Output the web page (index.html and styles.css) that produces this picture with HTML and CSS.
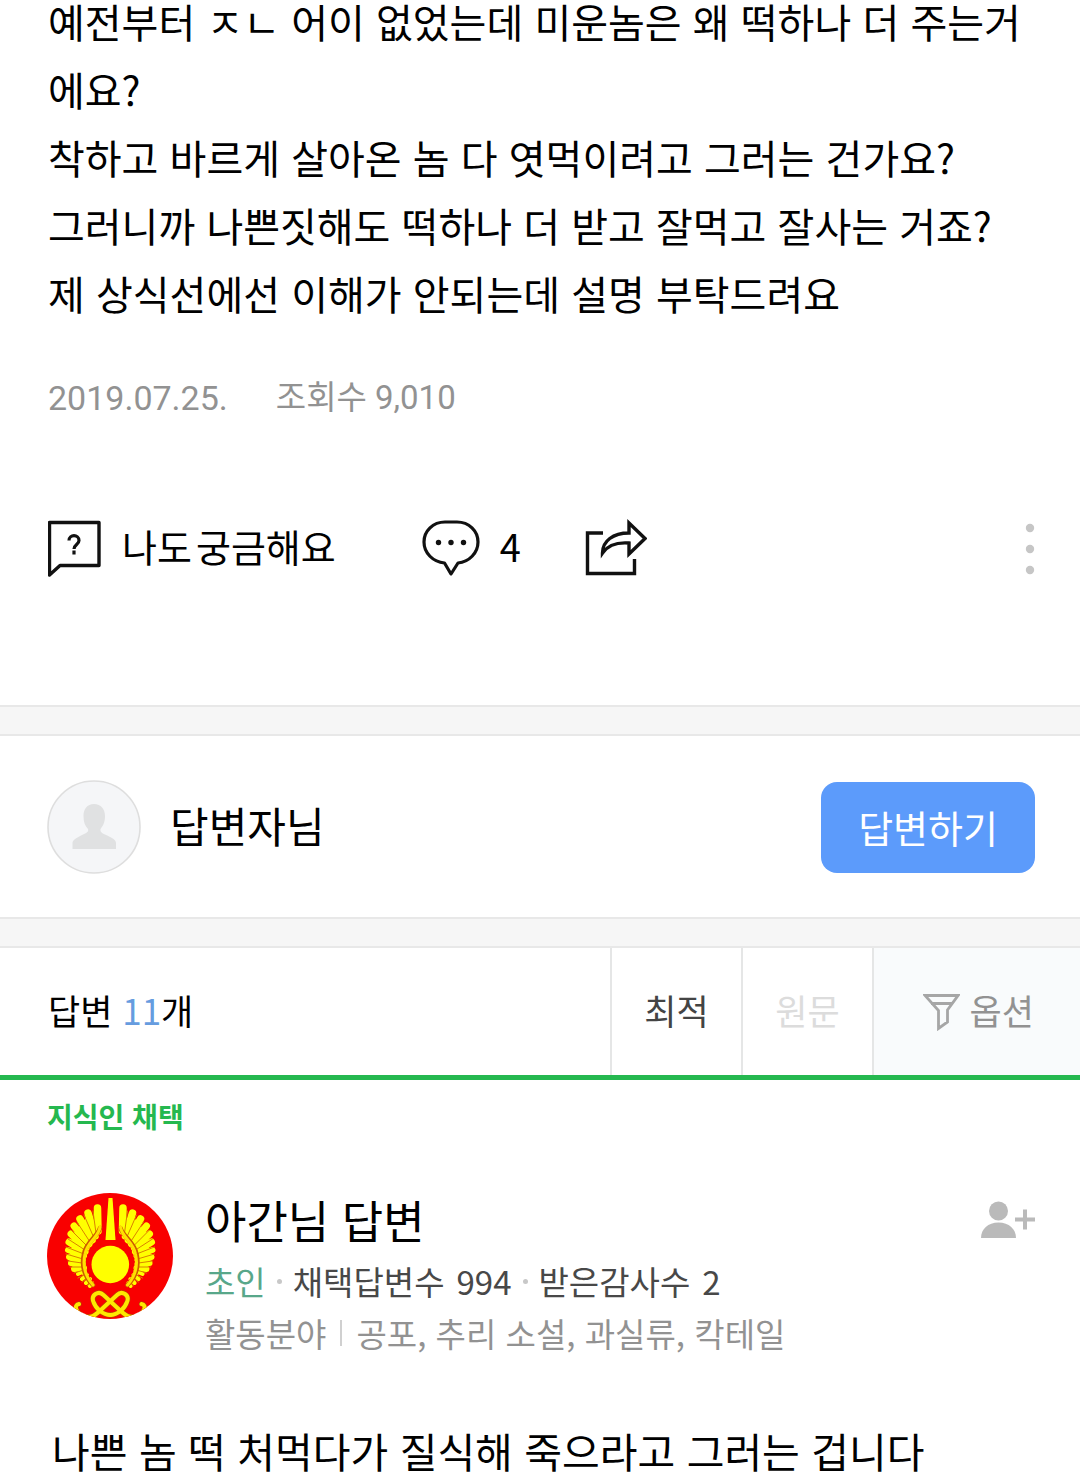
FILE: index.html
```html
<!DOCTYPE html>
<html lang="ko">
<head>
<meta charset="utf-8">
<title>지식인</title>
<meta name="viewport" content="width=device-width, initial-scale=1">
<link rel="stylesheet" href="styles.css">
</head>
<body>
<section class="question">
  <p class="question-text">예전부터 ㅈㄴ 어이 없었는데 미운놈은 왜 떡하나 더 주는거에요?<br>착하고 바르게 살아온 놈 다 엿먹이려고 그러는 건가요?<br>그러니까 나쁜짓해도 떡하나 더 받고 잘먹고 잘사는 거죠?<br>제 상식선에선 이해가 안되는데 설명 부탁드려요</p>
  <div class="meta">
    <span>2019.07.25.</span>
    <span class="views">조회수 9,010</span>
  </div>
  <div class="actions">
    <button class="action curious">
      <svg width="54" height="60" viewBox="0 0 54 60" fill="none" stroke="#111" stroke-width="3.4">
        <path d="M1.500 4.500H51V47.500H12L1.500 57Z" stroke-linejoin="round"/>
        <path d="M21 22.500c0-6.500 10-6.500 10 0c0 4-5 4-5 8.500M26 32.500v4" stroke-width="3.2"/>
      </svg>
      <span class="action-label"><span>나도</span><span>궁금해요</span></span>
    </button>
    <button class="action comments">
      <svg width="58" height="60" viewBox="0 0 58 60" fill="none" stroke="#111" stroke-width="3.2">
        <path d="M23 4H35C47 4 56 13 56 24C56 35 47 44 36 45L29 56L22.500 45C11 44 2 35 2 24C2 13 11 4 23 4Z" stroke-linejoin="round"/>
        <g fill="#111" stroke="none"><circle cx="16.500" cy="24.500" r="2.700"/><circle cx="29" cy="24.500" r="2.700"/><circle cx="41.500" cy="24.500" r="2.700"/></g>
      </svg>
      <span class="action-label">4</span>
    </button>
    <button class="action share" aria-label="공유">
      <svg width="62" height="60" viewBox="0 0 62 60" fill="none" stroke="#111" stroke-width="3.4">
        <path d="M18 15H2.500V55.500H49.500V41"/>
        <path d="M17.500 35C17.500 23 28 15 44 15V5L60 20.500L44 36V25C31 24 23 27 17.500 35Z"/>
      </svg>
    </button>
    <button class="action more" aria-label="더보기">
      <svg width="10" height="60" viewBox="0 0 10 60" fill="#c6c6c6"><circle cx="5" cy="10" r="4.200"/><circle cx="5" cy="31" r="4.200"/><circle cx="5" cy="52" r="4.200"/></svg>
    </button>
  </div>
</section>

<div class="divider"></div>

<section class="answerer">
  <svg class="avatar" viewBox="0 0 94 94">
    <circle cx="47" cy="47" r="46" fill="#f5f6f8" stroke="#dedede" stroke-width="1.600"/>
    <path d="M47 24C54 24 58 29 58 36C58 42 56 46 53.500 49C53 52 55 53 58 54.500C66 58 69 60 69 63V69H25.500V63C25.500 60 29 58 36 54.500C39 53 42 52 41 49C38 46 36.500 42 36.500 36C36.500 29 40 24 47 24Z" fill="#e0e1e2"/>
  </svg>
  <span class="answerer-name">답변자님</span>
  <button class="answer-btn">답변하기</button>
</section>

<div class="divider"></div>

<section class="answers">
  <div class="answers-bar">
    <h2 class="answers-count">답변 <span>11</span>개</h2>
    <button class="tab tab-on">최적</button>
    <button class="tab tab-off">원문</button>
    <button class="tab option">
      <svg width="37" height="38" viewBox="0 0 37 38" fill="none" stroke="#a6a6a6" stroke-width="2.800">
        <path d="M2 2.500H35L24.500 17V29L15.500 35.500V17.500ZM8 10.500H29"/>
      </svg>
      <span>옵션</span>
    </button>
  </div>

  <article class="answer">
    <p class="picked">지식인 채택</p>
    <header class="profile">
      <svg class="profile-pic" viewBox="0 0 126 126">
        <defs>
          <clipPath id="round"><circle cx="63" cy="63" r="63"/></clipPath>
          <g id="wing" fill="none" stroke-linecap="round">
            <path d="M50 41L41 51L36 63L36 74L45 90L30 77L24 60L27 40L40 24Z" fill="#ff0"/>
            <g stroke="#ff0">
              <path d="M50.500 15L51 38M41 20L48 43M33 26L45 47" stroke-width="7.500"/>
              <path d="M27 33L42 51M24 41L39 55M22 49L38 59" stroke-width="7"/>
              <path d="M21 57L37 63M22 64L36 67M24 70L36 71M27 76L37 75" stroke-width="6"/>
              <path d="M31 81L38 78M35 86L40 82M39 90L43 86M43 93L45 90" stroke-width="4"/>
            </g>
            <g stroke="#d98200" stroke-width="1">
              <path d="M46 18L49 40M37 22L47 45M30 29L43 49M24 37L40 53M21 46L38 57M19 54L37 61M19 61L36 66M21 68L35 70M23 74L36 74M27 80L37 77M31 85L39 81M35 89L41 85M40 93L44 89"/>
            </g>
            <path d="M53 35C51 43 39 49 37 61C34 74 38 84 46 92" stroke="#cf5a00" stroke-width="4.500"/>
            <path d="M53 34C52 44 40 49 38 61C35 74 39 84 46 92" stroke="#ffe100" stroke-width="3"/>
          </g>
          <path id="strand" d="M32 111C26 112 30 120 34 122C43 127 49 122 56 115L70 102C75 97 83 102 80 109C78 115 71 122 63 122"/>
        </defs>
        <g clip-path="url(#round)">
          <rect width="126" height="126" fill="#f90000"/>
          <use href="#wing"/>
          <use href="#wing" transform="matrix(-1 0 0 1 126.500 0)"/>
          <path d="M61.500 5H65.500L68.500 47H58.500Z" fill="#ff0"/>
          <circle cx="63.300" cy="71.500" r="18.800" fill="#ff0"/>
          <g fill="none" stroke="#b84000" stroke-width="5.400" stroke-linecap="round">
            <use href="#strand"/><use href="#strand" transform="matrix(-1 0 0 1 126.500 0)"/>
          </g>
          <g fill="none" stroke="#ffe800" stroke-width="4" stroke-linecap="round">
            <use href="#strand"/><use href="#strand" transform="matrix(-1 0 0 1 126.500 0)"/>
          </g>
        </g>
      </svg>
      <div class="profile-info">
        <h3 class="profile-name">아간님 답변</h3>
        <p class="stats"><span class="rank">초인</span><i class="dot"></i><span>채택답변수</span><span class="num">994</span><i class="dot"></i><span>받은감사수</span><span class="num">2</span></p>
        <p class="fields"><span>활동분야</span><i class="bar"></i><span>공포, 추리 소설, 과실류, 칵테일</span></p>
      </div>
      <button class="follow" aria-label="팬 추가">
        <svg width="54" height="38" viewBox="0 0 54 38" fill="#bababa">
          <circle cx="17.500" cy="10" r="9.500"/>
          <path d="M0 37C0 28 7 21.500 17.500 21.500S35 28 35 37Z"/>
          <path d="M42 8.500h4v8h8v4h-8v8h-4v-8h-8v-4h8z"/>
        </svg>
      </button>
    </header>
    <p class="answer-text">나쁜 놈 떡 처먹다가 질식해 죽으라고 그러는 겁니다</p>
  </article>
</section>
</body>
</html>
```
FILE: styles.css
```css
* {
  box-sizing: border-box;
}

body {
  margin: 0;
  background: #fff;
  color: #000;
  font-family: "Noto Sans CJK KR", sans-serif;
}

p, h2, h3 {
  margin: 0;
  font-weight: 400;
}

button {
  margin: 0;
  padding: 0;
  border: 0;
  background: none;
  color: inherit;
  font: inherit;
  cursor: pointer;
}

svg {
  display: block;
  flex: none;
}

.divider {
  height: 31px;
  border: solid #e8e8e8;
  border-width: 2px 0;
  background: #f6f6f6;
}

/* Question */
.question {
  padding: 0 45px 127px 48px;
}

.question-text {
  margin-top: -13px;
  font-size: 40px;
  line-height: 68px;
  word-break: break-all;
}

.meta {
  display: flex;
  gap: 48px;
  margin-top: 46px;
  color: #929292;
  font-family: Roboto, "Noto Sans CJK KR", sans-serif;
  font-size: 34px;
  line-height: 50px;
}

.views {
  font-size: 33px;
}

.actions {
  display: flex;
  align-items: center;
  margin-top: 95px;
  font-size: 38px;
  line-height: 54px;
}

.action {
  display: flex;
  align-items: center;
  gap: 20px;
}

.action-label {
  display: flex;
  gap: 4px;
  padding-bottom: 4px;
}

.comments {
  margin-left: 86px;
}

.share {
  margin-left: 64px;
}

.more {
  margin-left: auto;
}

/* Answer writing */
.answerer {
  display: flex;
  align-items: center;
  padding: 44px 45px 43px 47px;
}

.avatar {
  width: 94px;
  height: 94px;
}

.answerer-name {
  margin-left: 29px;
  padding-bottom: 4px;
  font-size: 42px;
  line-height: 60px;
}

.answer-btn {
  margin-left: auto;
  padding: 17px 37px 18px;
  border-radius: 16px;
  background: #5c9bfb;
  color: #fff;
  font-size: 38px;
  line-height: 56px;
}

/* Answer list */
.answers-bar {
  display: flex;
  height: 132px;
  border-bottom: 5px solid #25b84f;
  font-size: 35px;
}

.answers-count {
  flex: 1;
  align-self: center;
  padding: 0 0 4px 48px;
  font-size: 35px;
}

.answers-count span {
  color: #669cdf;
}

.tab {
  width: 131px;
  padding-bottom: 4px;
  border-left: 2px solid #e5e6e6;
}

.tab-on {
  color: #444;
}

.tab-off {
  color: #dcdcdc;
}

.option {
  display: flex;
  align-items: center;
  justify-content: flex-end;
  gap: 10px;
  width: 208px;
  padding: 0 46px 0 0;
  background: #f9fbfc;
  color: #929292;
}

.option span {
  padding-bottom: 4px;
}

.answer {
  padding: 16px 45px 0 47px;
}

.picked {
  color: #25b84f;
  font-size: 28px;
  font-weight: 700;
  line-height: 40px;
}

.profile {
  display: flex;
  align-items: flex-start;
  margin-top: 49px;
}

.profile-pic {
  width: 126px;
  height: 126px;
  margin-top: 8px;
}

.profile-info {
  flex: 1;
  margin-left: 32px;
}

.profile-name {
  font-size: 45px;
  line-height: 70px;
}

.stats, .fields {
  display: flex;
  align-items: center;
  font-size: 33px;
  line-height: 52px;
}

.stats {
  color: #484848;
}

.rank {
  color: #58a78a;
}

.dot {
  width: 5px;
  height: 5px;
  margin: 0 11px;
  border-radius: 50%;
  background: #c8c8c8;
}

.num {
  margin-left: 12px;
}

.fields {
  color: #929292;
}

.bar {
  width: 2px;
  height: 26px;
  margin: 0 14px;
  background: #d0d0d0;
}

.follow {
  margin-top: 16px;
}

.answer-text {
  margin-top: 68px;
  padding-left: 5px;
  font-size: 41px;
  line-height: 46px;
}
```
